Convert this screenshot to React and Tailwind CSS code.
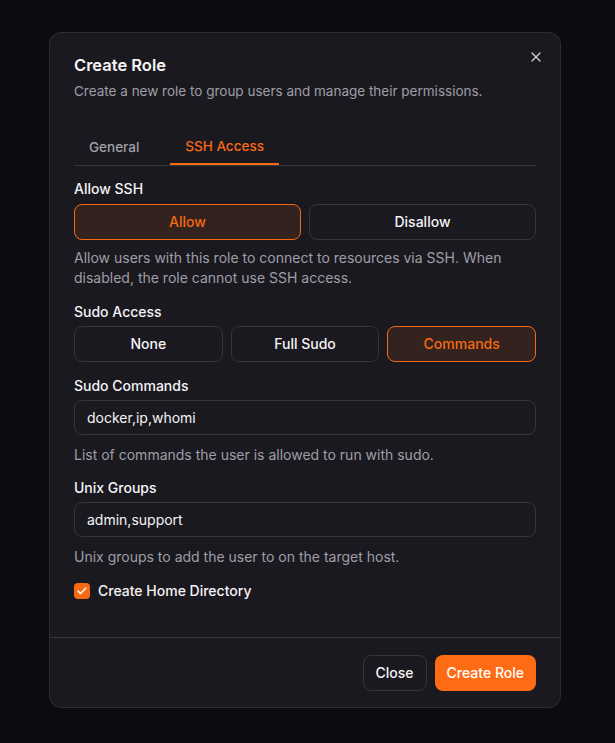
import { X, Check } from 'lucide-react';

const Choice = ({ label, active }) => (
  <button
    className={
      active
        ? 'h-9 flex-1 rounded-lg border border-[#f66a14] bg-[#33221e] text-sm font-medium text-[#f66a14]'
        : 'h-9 flex-1 rounded-lg border border-[#36343b] bg-transparent text-sm font-medium text-[#f4f4f5]'
    }
  >
    {label}
  </button>
);

const Field = ({ label, value, help }) => (
  <div>
    <div className="text-sm font-medium text-[#f4f4f5]">{label}</div>
    <div className="mt-1 flex h-[35px] items-center rounded-lg border border-[#36343b] px-3 text-sm text-[#f4f4f5]">
      {value}
    </div>
    <p className="mt-2.5 text-sm text-[#9f9ea6]">{help}</p>
  </div>
);

export default function App() {
  return (
    <div
      className="min-h-[743px] bg-[#0c0b10] pt-8"
      style={{ fontFamily: 'Inter, "Noto Sans", sans-serif' }}
    >
      <div className="relative ml-[49px] w-[512px] rounded-xl border border-[#2e2c33] bg-[#1b1920]">
        <button className="absolute right-4 top-4 text-[#c9c8cd]">
          <X size={16} strokeWidth={2} />
        </button>

        <div className="px-6 pt-5">
          <h2 className="text-[16.5px] leading-6 font-semibold text-[#f4f4f5]">Create Role</h2>
          <p className="mt-1 text-[13.5px] leading-5 text-[#9f9ea6]">
            Create a new role to group users and manage their permissions.
          </p>

          {/* Tabs */}
          <div className="mt-7 flex gap-4 border-b border-[#36343b]">
            <div className="flex h-9 items-center px-[15px] text-[13.5px] font-medium text-[#a1a0a8]">
              General
            </div>
            <div className="-mb-px flex h-9 items-center border-b-2 border-[#f66a14] px-[15px] text-[13.5px] font-medium text-[#f66a14]">
              SSH Access
            </div>
          </div>

          <div className="pt-[13px] pb-9">
            <div className="text-sm font-medium text-[#f4f4f5]">Allow SSH</div>
            <div className="mt-[5px] flex gap-2">
              <Choice label="Allow" active />
              <Choice label="Disallow" />
            </div>
            <p className="mt-2 text-sm text-[#9f9ea6]">
              Allow users with this role to connect to resources via SSH. When disabled, the role cannot use SSH access.
            </p>

            <div className="mt-3.5 text-sm font-medium text-[#f4f4f5]">Sudo Access</div>
            <div className="mt-1 flex gap-2">
              <Choice label="None" />
              <Choice label="Full Sudo" />
              <Choice label="Commands" active />
            </div>

            <div className="mt-3.5">
              <Field
                label="Sudo Commands"
                value="docker,ip,whomi"
                help="List of commands the user is allowed to run with sudo."
              />
            </div>
            <div className="mt-[13px]">
              <Field
                label="Unix Groups"
                value="admin,support"
                help="Unix groups to add the user to on the target host."
              />
            </div>

            <label className="mt-3.5 flex items-center gap-2">
              <span className="flex h-4 w-4 items-center justify-center rounded bg-[#f66a14] text-white">
                <Check size={12} strokeWidth={3} />
              </span>
              <span className="text-sm font-medium text-[#f4f4f5]">Create Home Directory</span>
            </label>
          </div>
        </div>

        <div className="flex justify-end gap-2 border-t border-[#36343b] px-6 pt-[17px] pb-4">
          <button className="h-9 rounded-lg border border-[#36343b] px-3 text-sm font-medium text-[#f4f4f5]">
            Close
          </button>
          <button className="h-9 rounded-lg bg-[#fe6b14] px-3 text-sm font-medium text-white">
            Create Role
          </button>
        </div>
      </div>
    </div>
  );
}
